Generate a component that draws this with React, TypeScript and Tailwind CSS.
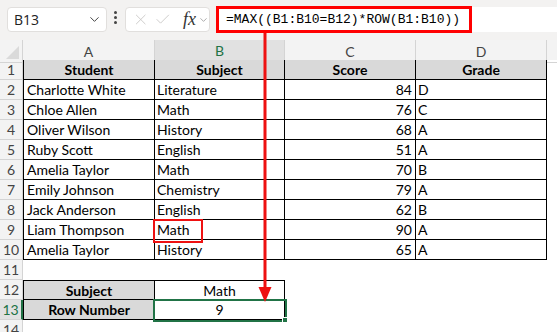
import {ChevronDown, Check, X} from "lucide-react"

const cols = ["A", "B", "C", "D"]

const rows = [
  ["Charlotte White", "Literature", "84", "D"],
  ["Chloe Allen", "Math", "76", "C"],
  ["Oliver Wilson", "History", "68", "A"],
  ["Ruby Scott", "English", "51", "A"],
  ["Amelia Taylor", "Math", "70", "B"],
  ["Emily Johnson", "Chemistry", "79", "A"],
  ["Jack Anderson", "English", "62", "B"],
  ["Liam Thompson", "Math", "90", "A"],
  ["Amelia Taylor", "History", "65", "A"],
]

const grid = "grid grid-cols-[23px_132px_130px_131px_131px_1fr]"

const RowHead = ({n, active}: {n: number; active?: boolean}) => (
  <div
    className={
      active
        ? "flex h-[20px] items-center justify-center border-b border-r-2 border-b-[#d4d4d4] border-r-[#217346] bg-[#e1e1e1] text-[14px] text-[#217346]"
        : "flex h-[20px] items-center justify-center border-b border-r border-[#d4d4d4] bg-[#f3f3f3] text-[14px] text-[#444]"
    }
  >
    {n}
  </div>
)

const FormulaBar = () => (
  <div className="flex h-[40px] items-start bg-[#f3f2f1] pt-[7px]">
    <div className="ml-[7px] flex h-[25px] w-[100px] items-center justify-between rounded-[4px] border border-[#e1dfdd] bg-white pl-[6px] pr-[4px] font-['Open_Sans'] text-[14px] text-[#222]">
      <span>B13</span>
      <ChevronDown size={15} strokeWidth={1.6} className="text-[#444]" />
    </div>
    <div className="ml-[7px] mt-[4px] flex flex-col gap-[2px]">
      <span className="h-[3px] w-[3px] rounded-full bg-[#444]" />
      <span className="h-[3px] w-[3px] rounded-full bg-[#444]" />
      <span className="h-[3px] w-[3px] rounded-full bg-[#444]" />
    </div>
    <div className="ml-[8px] flex h-[25px] w-[85px] items-center rounded-[4px] border border-[#e1dfdd] bg-white pl-[6px] text-[#c8c6c4]">
      <X size={19} strokeWidth={1.2} />
      <Check size={19} strokeWidth={1.2} className="ml-[5px]" />
      <span className="ml-[11px] font-['Liberation_Serif'] text-[18px] italic text-[#333]">fx</span>
      <ChevronDown size={12} strokeWidth={1.5} className="ml-[2px] text-[#888]" />
    </div>
    <div className="ml-[6px] flex h-[25px] flex-1 items-center bg-white">
      <div className="flex h-[27px] w-[256px] items-center border-[3px] border-[#ff0000] pl-[7px] font-['Liberation_Mono'] text-[13px] text-black">
        =MAX((B1:B10=B12)*ROW(B1:B10))
      </div>
    </div>
  </div>
)

export default function App() {
  return (
    <div className="relative h-[332px] w-[557px] overflow-hidden bg-white font-['Lato'] text-[14px] text-black">
      <FormulaBar />

      {/* column headings */}
      <div className={`${grid} h-[20px] bg-[#f3f3f3] text-[14px] text-[#444]`}>
        <div className="relative border-b border-r border-[#d4d4d4]">
          <span className="absolute bottom-[3px] right-[3px] h-0 w-0 border-b-[13px] border-l-[13px] border-b-[#dadada] border-l-transparent" />
        </div>
        {cols.map(c => (
          <div
            key={c}
            className={
              c === "B"
                ? "flex items-center justify-center border-b-2 border-r border-b-[#217346] border-r-[#d4d4d4] bg-[#e1e1e1] text-[#217346]"
                : "flex items-center justify-center border-b border-r border-[#d4d4d4]"
            }
          >
            {c}
          </div>
        ))}
        <div className="border-b border-[#d4d4d4]" />
      </div>

      {/* table header */}
      <div className={grid}>
        <RowHead n={1} />
        {["Student", "Subject", "Score", "Grade"].map((h, i) => (
          <div
            key={h}
            className={`flex h-[20px] items-center justify-center border-b border-r border-black bg-[#d9d9d9] font-bold ${i === 0 ? "border-l" : ""}`}
          >
            {h}
          </div>
        ))}
        <div />
      </div>

      {rows.map((r, i) => (
        <div key={i} className={grid}>
          <RowHead n={i + 2} />
          <div className="flex h-[20px] items-center border-b border-l border-r border-black pl-[3px]">{r[0]}</div>
          <div className="relative flex h-[20px] items-center border-b border-r border-black pl-[2px]">
            {r[1]}
            {i === 7 && <span className="absolute left-[-2px] top-[-1px] h-[24px] w-[50px] border-[2.5px] border-[#ee1111]" />}
          </div>
          <div className="flex h-[20px] items-center justify-end border-b border-r border-black pr-[3px]">{r[2]}</div>
          <div className="flex h-[20px] items-center border-b border-r border-black pl-[2px]">{r[3]}</div>
          <div />
        </div>
      ))}

      <div className={grid}>
        <RowHead n={11} />
      </div>

      <div className={grid}>
        <RowHead n={12} />
        <div className="flex h-[20px] items-center justify-center border-b border-l border-r border-t border-black bg-[#d9d9d9] font-bold">
          Subject
        </div>
        <div className="flex h-[20px] items-center justify-center border-b border-r border-t border-black">Math</div>
      </div>

      <div className={grid}>
        <RowHead n={13} active />
        <div className="flex h-[20px] items-center justify-center border-b border-l border-r border-black bg-[#d9d9d9] font-bold">
          Row Number
        </div>
        <div className="relative flex h-[20px] items-center justify-center border-b border-r border-black">
          9
          <span className="absolute left-[-2px] top-[-1px] h-[23px] w-[134px] border-2 border-[#217346]" />
          <span className="absolute bottom-[-4px] right-[-4px] h-[6px] w-[6px] border border-white bg-[#217346]" />
        </div>
      </div>

      <div className={grid}>
        <RowHead n={14} />
      </div>

      {/* arrow from formula to result */}
      <svg className="absolute left-0 top-0" width="557" height="332">
        <line x1="265" y1="33" x2="265" y2="290" stroke="#ee1111" strokeWidth="3" />
        <polygon points="258.5,287 271.5,287 265,302" fill="#ee1111" />
      </svg>
    </div>
  )
}
